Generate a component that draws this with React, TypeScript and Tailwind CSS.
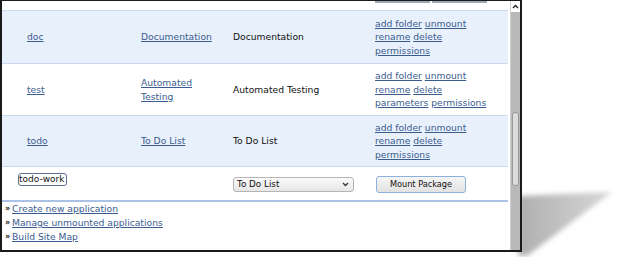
import React from "react";

const font = { fontFamily: '"DejaVu Sans", "Liberation Sans", sans-serif' };

function L({ children }: { children: React.ReactNode }) {
  return <a className="text-[#3b5c8f] underline decoration-[#3b5c8f] cursor-pointer">{children}</a>;
}

function Row({
  bg,
  h,
  c1,
  c2,
  c3,
  actions,
}: {
  bg: string;
  h: string;
  c1: string;
  c2: React.ReactNode;
  c3: string;
  actions: React.ReactNode;
}) {
  return (
    <div className={`flex items-center ${bg} ${h} border-b border-[#c9d9ef]`}>
      <div className="w-[139px] pl-[25px]"><L>{c1}</L></div>
      <div className="w-[92px]">{c2}</div>
      <div className="w-[142px] text-[#111]">{c3}</div>
      <div className="flex-1">{actions}</div>
    </div>
  );
}

function FootLink({ children }: { children: React.ReactNode }) {
  return (
    <div className="flex items-center h-[14px]">
      <span className="w-[8px] pl-[1px] text-[#222] text-[8px] leading-[14px] font-bold">»</span>
      <L>{children}</L>
    </div>
  );
}

export default function App() {
  return (
    <div className="relative w-[618px] h-[257px] bg-white overflow-hidden" style={font}>
      <svg className="absolute left-0 top-0" width="618" height="257">
        <defs>
          <linearGradient id="sg" x1="0" y1="0" x2="1" y2="0">
            <stop offset="0" stopColor="#afafaf" />
            <stop offset="1" stopColor="#d8d8d8" />
          </linearGradient>
          <filter id="bl" x="-20%" y="-20%" width="140%" height="140%">
            <feGaussianBlur stdDeviation="2.5" />
          </filter>
        </defs>
        <polygon points="518,196 612,192 527,256 518,256" fill="url(#sg)" filter="url(#bl)" />
      </svg>
      <div className="relative w-[522px] h-[252px] border-t border-l-2 border-r-2 border-b-2 border-[#1a1a1a] bg-white flex text-[9.2px] leading-[13.5px]">
        <div className="w-[508px] flex flex-col">
          <div className="h-[10px] bg-white border-b border-[#c9d9ef] relative">
            <div className="absolute left-[373px] top-0 w-[55px] h-[2px] bg-[#9aa8b8]" />
            <div className="absolute left-[430px] top-0 w-[55px] h-[2px] bg-[#9aa8b8]" />
          </div>
          <Row
            bg="bg-[#e8f0fb]"
            h="h-[53px]"
            c1="doc"
            c2={<L>Documentation</L>}
            c3="Documentation"
            actions={
              <div>
                <L>add folder</L> <L>unmount</L>
                <br />
                <L>rename</L> <L>delete</L>
                <br />
                <L>permissions</L>
              </div>
            }
          />
          <Row
            bg="bg-white"
            h="h-[52px]"
            c1="test"
            c2={
              <div>
                <L>Automated</L>
                <br />
                <L>Testing</L>
              </div>
            }
            c3="Automated Testing"
            actions={
              <div>
                <L>add folder</L> <L>unmount</L>
                <br />
                <L>rename</L> <L>delete</L>
                <br />
                <L>parameters</L> <L>permissions</L>
              </div>
            }
          />
          <Row
            bg="bg-[#e8f0fb]"
            h="h-[51px]"
            c1="todo"
            c2={<L>To Do List</L>}
            c3="To Do List"
            actions={
              <div>
                <L>add folder</L> <L>unmount</L>
                <br />
                <L>rename</L> <L>delete</L>
                <br />
                <L>permissions</L>
              </div>
            }
          />
          <div className="flex h-[35px] bg-white border-b-2 border-[#aac2e6]">
            <div className="w-[139px] pl-[16px] pt-[6px]">
              <div className="w-[49px] h-[13px] border border-[#5c6f8e] rounded-[3px] bg-white text-[9px] leading-[11px] text-[#111] overflow-hidden whitespace-nowrap">
                todo-work
              </div>
            </div>
            <div className="w-[92px]" />
            <div className="w-[142px] pt-[10px]">
              <div className="w-[121px] h-[15px] border border-[#b5b5b5] rounded-[3px] bg-gradient-to-b from-[#fbfbfb] to-[#e6e6e6] flex items-center justify-between pl-[3px] pr-[4px] text-[8.8px] text-[#111]">
                <span>To Do List</span>
                <svg width="7" height="5" viewBox="0 0 7 5">
                  <path d="M1 1 L3.5 3.5 L6 1" stroke="#333" strokeWidth="1.3" fill="none" />
                </svg>
              </div>
            </div>
            <div className="flex-1 pt-[9px] pl-[1px]">
              <div className="w-[90px] h-[17px] border border-[#8eb0dc] rounded-[3px] bg-gradient-to-b from-[#f6f6f6] to-[#e2e2e2] flex items-center justify-center text-[8.2px] text-[#111]">
                Mount Package
              </div>
            </div>
          </div>
          <div className="pl-[2px]">
            <FootLink>Create new application</FootLink>
            <FootLink>Manage unmounted applications</FootLink>
            <FootLink>Build Site Map</FootLink>
          </div>
        </div>
        <div className="w-[2px] bg-white" />
        <div className="w-[10px] flex flex-col bg-[#b9b9b9] border-l border-[#d0d0d0]">
          <div className="h-[11px] bg-white flex items-center justify-center">
            <svg width="7" height="5" viewBox="0 0 7 5">
              <path d="M1 4 L3.5 1.5 L6 4" stroke="#222" strokeWidth="1.3" fill="none" />
            </svg>
          </div>
          <div className="h-[100px]" />
          <div className="h-[74px] mx-[1px] rounded-[3px] bg-[#dcdcdc] border border-[#9a9a9a]" />
        </div>
      </div>
    </div>
  );
}
